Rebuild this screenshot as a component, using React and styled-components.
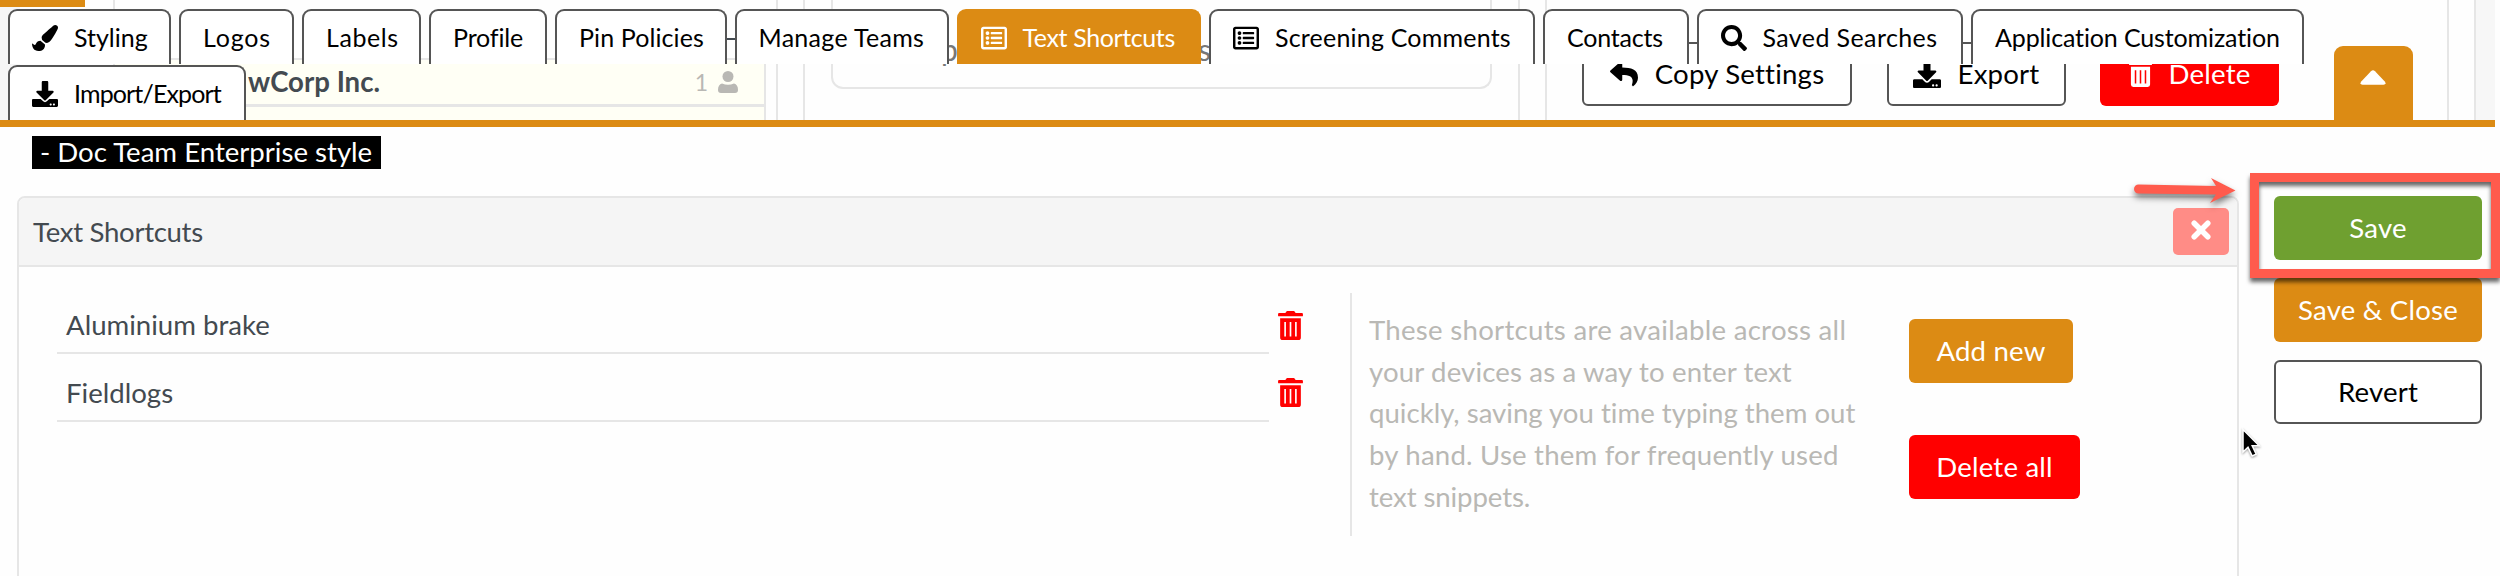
import styled, { createGlobalStyle } from 'styled-components';
import { FaPaintBrush, FaDownload, FaRegListAlt, FaSearch, FaReply } from 'react-icons/fa';

const ORANGE = '#dc8b14';
const RED = '#ff0000';
const LINE = '#e6e6e6';
const MUTED = '#b9b8b4';
const CALLOUT = '#ff5b4d';

const TrashIcon = (props) => (
  <svg viewBox="0 0 24 28" fill="currentColor" {...props}>
    <path d="M1 2h6l1.500-2h7l1.500 2h6q1 0 1 1v1.500q0 .5-.5.5h-23q-.5 0-.5-.5v-1.500q0-1 1-1z" />
    <path
      fillRule="evenodd"
      d="M2 7h20v18.500q0 2.500-2.500 2.500h-15q-2.500 0-2.500-2.500zM6 10.500v14h1.600v-14zM11.200 10.500v14h1.600v-14zM16.400 10.500v14h1.600v-14z"
    />
  </svg>
);

const UserIcon = () => (
  <svg width="20" height="22" viewBox="0 0 20 22" fill="currentColor">
    <circle cx="10" cy="5.500" r="5.500" />
    <path d="M4 12.500q6 2.500 12 0q4 1 4 6.500q0 3-3 3h-14q-3 0-3-3q0-5.500 4-6.500z" />
  </svg>
);

const CaretIcon = () => (
  <svg width="26" height="15" viewBox="0 0 26 15" fill="currentColor">
    <path d="M11 1.200q2-2 4 0l10 10.500q1.500 3-1.500 3h-21q-3 0-1.500-3z" />
  </svg>
);

const CrossIcon = () => (
  <svg width="20" height="20" viewBox="0 0 20 20" stroke="currentColor" strokeWidth="5.500" strokeLinecap="round">
    <path d="M3.200 3.200l13.600 13.600M16.800 3.200l-13.600 13.600" />
  </svg>
);

const tabs = [
  { label: 'Styling', icon: FaPaintBrush, width: 163, track: 0 },
  { label: 'Logos', width: 115, track: 0.8 },
  { label: 'Labels', width: 119, track: 0.6 },
  { label: 'Profile', width: 118, track: -0.15 },
  { label: 'Pin Policies', width: 171.5, track: 0.1 },
  { label: 'Manage Teams', width: 214, track: 0.3 },
  { label: 'Text Shortcuts', icon: FaRegListAlt, width: 244.5, track: -0.38, active: true },
  { label: 'Screening Comments', icon: FaRegListAlt, width: 326, track: 0.2 },
  { label: 'Contacts', width: 145.5, track: -0.2 },
  { label: 'Saved Searches', icon: FaSearch, width: 266.5, track: 0.4 },
  { label: 'Application Customization', width: 333, track: -0.13 },
  { label: 'Import/Export', icon: FaDownload, width: 238, track: -0.86 },
];

const shortcuts = ['Aluminium brake', 'Fieldlogs'];

const help = [
  { text: 'These shortcuts are available across all', track: 0.28 },
  { text: 'your devices as a way to enter text', track: 0.14 },
  { text: 'quickly, saving you time typing them out', track: 0 },
  { text: 'by hand. Use them for frequently used', track: 0.2 },
  { text: 'text snippets.', track: -0.1 },
];

export default function App() {
  return (
    <Page>
      <GlobalStyle />

      <TopArea>
        <Backdrop>
          <SideColumn>
            <SideAccent />
          </SideColumn>
          <ListColumn>
            <PreviousRow />
            <CompanyRow>
              <strong>wCorp Inc.</strong>
              <Count>
                1 <UserIcon />
              </Count>
            </CompanyRow>
            <NextRow />
          </ListColumn>
          <FieldColumn>
            <Field>
              <span>p</span>
              <span>s</span>
            </Field>
          </FieldColumn>
          <ActionsColumn>
            <Button $kind="outline" $width={270}>
              <FaReply size={28} />
              Copy Settings
            </Button>
            <Button $kind="outline" $width={179}>
              <FaDownload size={28} />
              Export
            </Button>
            <Button $kind="danger" $width={179}>
              <TrashIcon width={23} height={27} />
              Delete
            </Button>
            <Toggle>
              <CaretIcon />
            </Toggle>
          </ActionsColumn>
          <EdgeColumn />
        </Backdrop>

        <TabBar>
          {tabs.map(({ label, icon: Icon, width, track, active }) => (
            <Tab key={label} $width={width} $track={track} $active={active}>
              {Icon && <Icon size={26} />}
              <span>{label}</span>
            </Tab>
          ))}
        </TabBar>
      </TopArea>

      <StyleName>- Doc Team Enterprise style</StyleName>

      <Main>
        <Panel>
          <PanelHeader>
            <h2>Text Shortcuts</h2>
            <CloseButton>
              <CrossIcon />
            </CloseButton>
          </PanelHeader>
          <PanelBody>
            <ShortcutList>
              {shortcuts.map((name) => (
                <ShortcutRow key={name}>
                  <ShortcutName>{name}</ShortcutName>
                  <TrashIcon width={25} height={29} />
                </ShortcutRow>
              ))}
            </ShortcutList>
            <Help>
              {help.map(({ text, track }) => (
                <HelpLine key={text} $track={track}>
                  {text}
                </HelpLine>
              ))}
            </Help>
            <ListActions>
              <Button $width={164}>Add new</Button>
              <Button $kind="danger" $width={171}>
                Delete all
              </Button>
            </ListActions>
          </PanelBody>
        </Panel>

        <SideActions>
          <Button $kind="success">Save</Button>
          <Button>Save &amp; Close</Button>
          <Button $kind="outline">Revert</Button>
        </SideActions>
      </Main>

      <SaveFrame />
      <Arrow viewBox="0 0 120 40">
        <path
          d="M8.500 9.500 L86 11 L81 3 L105.500 15.500 L80 28 L86 19.500 L8.500 18.500 A4.500 4.500 0 0 1 8.500 9.500z"
          fill={CALLOUT}
        />
      </Arrow>
      <Cursor viewBox="0 0 20 30">
        <path
          d="M2 2v22.500l5-4.700 4.200 8.700 4-1.800-4-8.400h7z"
          fill="#000"
          stroke="#fff"
          strokeWidth="1.500"
        />
      </Cursor>
    </Page>
  );
}

const GlobalStyle = createGlobalStyle`
  * {
    box-sizing: border-box;
  }

  body {
    margin: 0;
    background: #fefefe;
    font-family: Lato, 'Liberation Sans', sans-serif;
    font-size: 27.6px;
    line-height: 1.15;
    color: #434a50;
    font-variant-ligatures: none;
  }
`;

const Page = styled.div`
  position: relative;
  height: 576px;
  overflow: hidden;
`;

const TopArea = styled.header`
  position: relative;
  width: 2495px;
  height: 127px;
  border-bottom: 7px solid ${ORANGE};
`;

const Backdrop = styled.div`
  display: flex;
  height: 120px;
  overflow: hidden;
`;

const SideColumn = styled.div`
  width: 113px;
  background: linear-gradient(90deg, #f6f6f6 20px, #fefefe 20px);
`;

const SideAccent = styled.div`
  width: 85px;
  height: 7px;
  background: ${ORANGE};
`;

const ListColumn = styled.div`
  width: 665px;
  padding-right: 10px;
  border: solid ${LINE};
  border-width: 0 2px;
`;

const PreviousRow = styled.div`
  height: 40px;
  width: 60px;
  margin: 0 0 18px auto;
  border-bottom: 2px solid #434a50;
`;

const CompanyRow = styled.div`
  display: flex;
  align-items: center;
  justify-content: space-between;
  height: 49px;
  padding: 0 26px 0 133px;
  border: solid ${LINE};
  border-width: 2px 2px 3px 0;
  background: #fffff5;
`;

const Count = styled.span`
  display: flex;
  align-items: center;
  gap: 10px;
  font-size: 23px;
  color: ${MUTED};
`;

const NextRow = styled.div`
  height: 13px;
  border-right: 2px solid ${LINE};
  background: #fffff5;
`;

const FieldColumn = styled.div`
  width: 717px;
  margin-left: 25px;
  padding: 0 26px;
  border: solid ${LINE};
  border-width: 0 2px;
`;

const Field = styled.div`
  display: flex;
  justify-content: space-between;
  height: 89px;
  padding: 31px 279px 0 108px;
  border: 2px solid ${LINE};
  border-top: 0;
  border-radius: 0 0 12px 12px;
  font-size: 30px;
  line-height: 36px;
  color: #777;
`;

const ActionsColumn = styled.div`
  display: flex;
  gap: 34.5px;
  width: 904px;
  margin-left: 25px;
  padding: 42px 0 0 35px;
  border: solid ${LINE};
  border-width: 0 2px;
`;

const EdgeColumn = styled.div`
  flex: 1;
  margin-left: 25px;
  border-left: 2px solid ${LINE};
  background: #f7f7f7;
`;

const buttonKinds = {
  primary: `background: ${ORANGE}; color: #fff;`,
  danger: `background: ${RED}; color: #fff;`,
  success: 'background: #6fa030; color: #fff;',
  outline: 'background: #fff; color: #000; border: 2px solid #555;',
};

const Button = styled.button`
  display: flex;
  flex: none;
  align-items: center;
  justify-content: center;
  gap: 17px;
  width: ${(p) => (p.$width ? `${p.$width}px` : '100%')};
  height: 64px;
  padding: 0 0 1px;
  border: 0;
  border-radius: 6px;
  font: inherit;
  letter-spacing: 0.2px;
  white-space: nowrap;
  ${(p) => buttonKinds[p.$kind || 'primary']}
`;

const Toggle = styled.div`
  display: flex;
  justify-content: center;
  width: 79px;
  margin: 4px 0 0 20px;
  padding-top: 24px;
  border-radius: 9px 9px 0 0;
  background: ${ORANGE};
  color: #fff;
`;

const TabBar = styled.nav`
  position: absolute;
  inset: 9px 0 0 8px;
  display: flex;
  flex-wrap: wrap;
  align-content: flex-start;
  gap: 1px 8px;
`;

const Tab = styled.div`
  display: flex;
  align-items: center;
  gap: 16px;
  width: ${(p) => p.$width}px;
  height: 55px;
  padding-left: 22px;
  border: 2px solid ${(p) => (p.$active ? ORANGE : '#555')};
  border-bottom: 0;
  border-radius: 9px 9px 0 0;
  background: ${(p) => (p.$active ? ORANGE : '#fff')};
  color: ${(p) => (p.$active ? '#fff' : '#000')};
  font-size: 25px;
  letter-spacing: ${(p) => p.$track}px;
  white-space: nowrap;
`;

const StyleName = styled.div`
  width: 349px;
  height: 33px;
  margin: 9px 0 27px 32px;
  padding-left: 8px;
  background: #000;
  color: #fff;
  line-height: 32px;
  white-space: nowrap;
`;

const Main = styled.main`
  display: flex;
  gap: 35px;
  padding-left: 17px;
`;

const Panel = styled.section`
  width: 2222px;
  height: 400px;
  border: 2px solid ${LINE};
  border-radius: 8px;
`;

const PanelHeader = styled.div`
  display: flex;
  align-items: center;
  justify-content: space-between;
  height: 69px;
  padding: 0 8px 0 14px;
  border-bottom: 2px solid ${LINE};
  border-radius: 6px 6px 0 0;
  background: #f5f5f5;

  h2 {
    margin: 0;
    font-size: inherit;
    font-weight: 400;
    letter-spacing: -0.3px;
  }
`;

const CloseButton = styled.div`
  display: flex;
  align-items: center;
  justify-content: center;
  width: 56px;
  height: 47px;
  padding-bottom: 3px;
  border-radius: 5px;
  background: #ff8c86;
  color: #fff;
`;

const PanelBody = styled.div`
  display: flex;
  padding: 26px 0 0 38px;
`;

const ShortcutList = styled.div`
  width: 1293px;
`;

const ShortcutRow = styled.div`
  display: flex;
  align-items: flex-start;
  gap: 9px;
  height: 67.7px;
  color: ${RED};

  svg {
    margin-top: 17.5px;
  }
`;

const ShortcutName = styled.div`
  width: 1212px;
  height: 61px;
  padding: 16px 0 0 9px;
  border-bottom: 2px solid ${LINE};
  color: #434a50;
`;

const Help = styled.div`
  width: 559px;
  height: 243px;
  padding: 16px 0 0 17px;
  border-left: 2px solid ${LINE};
  color: ${MUTED};
  line-height: 41.7px;
  white-space: nowrap;
`;

const HelpLine = styled.div`
  letter-spacing: ${(p) => p.$track}px;
`;

const ListActions = styled.div`
  display: flex;
  flex-direction: column;
  gap: 52px;
  padding-top: 26px;
`;

const SideActions = styled.div`
  display: flex;
  flex-direction: column;
  gap: 18px;
  width: 208px;
`;

/* callout drawn over the save button */
const SaveFrame = styled.div`
  position: absolute;
  top: 173px;
  left: 2250px;
  width: 250px;
  height: 105px;
  border: 9px solid ${CALLOUT};
  filter: drop-shadow(0 4px 2px rgba(0, 0, 0, 0.6));
`;

const Arrow = styled.svg`
  position: absolute;
  top: 175px;
  left: 2130px;
  width: 120px;
  height: 40px;
  filter: drop-shadow(0 4px 3px rgba(0, 0, 0, 0.5));
`;

const Cursor = styled.svg`
  position: absolute;
  top: 427px;
  left: 2241px;
  width: 20px;
  height: 31px;
  filter: drop-shadow(0 1px 1px rgba(0, 0, 0, 0.4));
`;
